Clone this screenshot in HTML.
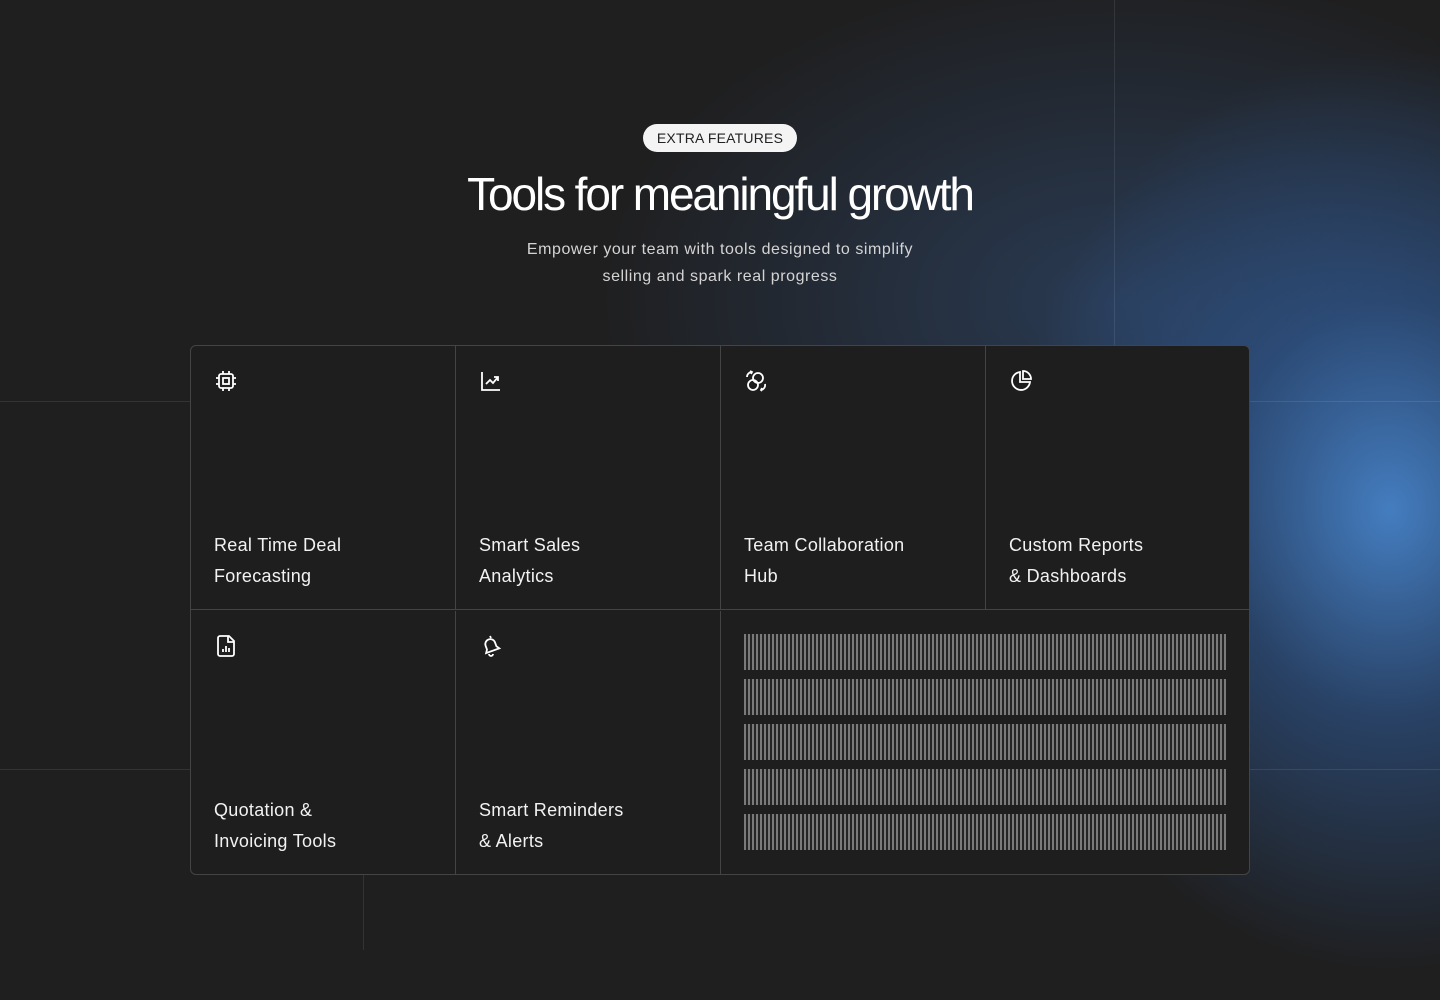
<!DOCTYPE html>
<html><head><meta charset="utf-8"><style>
*{margin:0;padding:0;box-sizing:border-box}
body{width:1440px;height:1000px;overflow:hidden;background:#1f1f20;font-family:"Liberation Sans",sans-serif;color:#fff;position:relative}
.glow{position:absolute;inset:0;background:radial-gradient(ellipse 380px 460px at 1390px 510px,rgba(70,130,200,.95),rgba(50,100,170,.5) 45%,rgba(31,31,32,0) 100%)}
.glow2{position:absolute;inset:0;background:radial-gradient(ellipse 520px 330px at 1120px 300px,rgba(60,110,180,.35),rgba(31,31,32,0) 100%)}
.l{position:absolute;background:rgba(255,255,255,.09)}
.pill{position:absolute;left:643px;top:124px;width:154px;height:28px;border-radius:14px;background:#f4f4f4;color:#222;font-size:14px;line-height:28px;text-align:center;letter-spacing:.2px}
h1{position:absolute;left:0;width:1440px;top:168px;text-align:center;font-size:46px;font-weight:500;letter-spacing:-2.1px;line-height:52px}
.sub{position:absolute;left:0;width:1440px;top:236px;text-align:center;font-size:16px;line-height:27px;color:#d4d4d4;letter-spacing:.55px}
.card{position:absolute;left:190px;top:345px;width:1060px;height:530px;border:1px solid #444;border-radius:6px;background:#1e1e1e;overflow:hidden}
.c{position:absolute;width:265px;height:264px;border-right:1px solid #444;border-bottom:1px solid #444}
.c svg{position:absolute;left:23px;top:23px}
.c p{position:absolute;left:23px;top:184px;font-size:18px;line-height:31px;color:#f2f2f2;letter-spacing:.3px}
.bars{position:absolute;left:553px;width:482px;height:36px;background:repeating-linear-gradient(90deg,#7a7a7a 0 2px,#252525 2px 4px)}
</style></head><body>
<div class="glow2"></div><div class="glow"></div>
<div class="l" style="left:1114px;top:0;width:1px;height:345px"></div>
<div class="l" style="left:0;top:401px;width:1440px;height:1px"></div>
<div class="l" style="left:0;top:769px;width:1440px;height:1px"></div>
<div class="l" style="left:363px;top:875px;width:1px;height:75px"></div>
<div class="pill">EXTRA FEATURES</div>
<h1>Tools for meaningful growth</h1>
<div class="sub">Empower your team with tools designed to simplify<br>selling and spark real progress</div>
<div class="card">
<div class="c" style="left:0;top:0"><svg width="24" height="24" viewBox="0 0 24 24" fill="none" stroke="#fff" stroke-width="1.8"><rect x="5" y="5" width="14" height="14" rx="2"/><rect x="9" y="9" width="6" height="6"/><path d="M9 2v3M15 2v3M9 19v3M15 19v3M2 9h3M2 15h3M19 9h3M19 15h3"/></svg><p>Real Time Deal<br>Forecasting</p></div>
<div class="c" style="left:265px;top:0"><svg width="24" height="24" viewBox="0 0 24 24" fill="none" stroke="#fff" stroke-width="1.8"><path d="M3 3v18h18M7 15l4-4 3 3 5-6M15 8h4v4"/></svg><p>Smart Sales<br>Analytics</p></div>
<div class="c" style="left:530px;top:0"><svg width="24" height="24" viewBox="0 0 24 24" fill="none" stroke="#fff" stroke-width="1.8"><circle cx="14" cy="9" r="5"/><circle cx="9" cy="16" r="5"/><path d="M3 8a5 5 0 0 1 5-5M6 2l2 1-1 2M21 15a5 5 0 0 1-4 6M18 22l-1-1 1-2"/></svg><p>Team Collaboration<br>Hub</p></div>
<div class="c" style="left:795px;top:0;border-right:none"><svg width="24" height="24" viewBox="0 0 24 24" fill="none" stroke="#fff" stroke-width="1.8"><path d="M11 3a9 9 0 1 0 10 10H11z"/><path d="M14 2a8 8 0 0 1 8 8h-8z"/></svg><p>Custom Reports<br>&amp; Dashboards</p></div>
<div class="c" style="left:0;top:265px"><svg width="24" height="24" viewBox="0 0 24 24" fill="none" stroke="#fff" stroke-width="1.8"><path d="M6 2h9l5 5v13a2 2 0 0 1-2 2H6a2 2 0 0 1-2-2V4a2 2 0 0 1 2-2zM14 2v6h6M9 18v-3M12 18v-6M15 18v-4"/></svg><p>Quotation &amp;<br>Invoicing Tools</p></div>
<div class="c" style="left:265px;top:265px"><svg width="24" height="24" viewBox="0 0 24 24" fill="none" stroke="#fff" stroke-width="1.8"><path d="M12 5a5 5 0 0 1 5 5v4l2 3H5l2-3v-4a5 5 0 0 1 5-5z" transform="rotate(-20 12 12)"/><path d="M10 20a2 2 0 0 0 4 0M11 2l1 2"/></svg><p>Smart Reminders<br>&amp; Alerts</p></div>
<div class="bars" style="top:288px"></div>
<div class="bars" style="top:333px"></div>
<div class="bars" style="top:378px"></div>
<div class="bars" style="top:423px"></div>
<div class="bars" style="top:468px"></div>
</div>
</body></html>
